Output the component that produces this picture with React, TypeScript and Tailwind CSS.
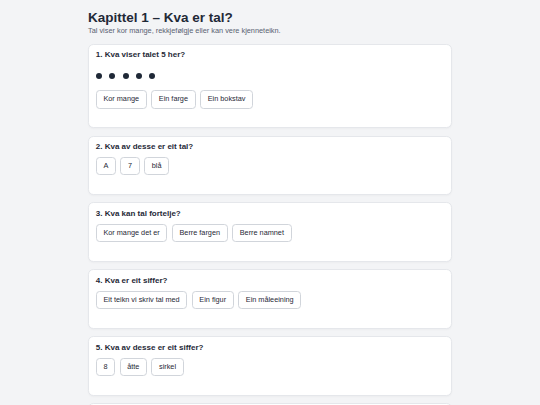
import React from 'react';

type Question = {
  id: number;
  text: string;
  dots?: number;
  options: string[];
};

const questions: Question[] = [
  { id: 1, text: 'Kva viser talet 5 her?', dots: 5, options: ['Kor mange', 'Ein farge', 'Ein bokstav'] },
  { id: 2, text: 'Kva av desse er eit tal?', options: ['A', '7', 'blå'] },
  { id: 3, text: 'Kva kan tal fortelje?', options: ['Kor mange det er', 'Berre fargen', 'Berre namnet'] },
  { id: 4, text: 'Kva er eit siffer?', options: ['Eit teikn vi skriv tal med', 'Ein figur', 'Ein måleeining'] },
  { id: 5, text: 'Kva av desse er eit siffer?', options: ['8', 'åtte', 'sirkel'] },
  { id: 6, text: 'Kva tal kjem etter 3?', options: ['4', '2', '5'] },
];

export default function App() {
  return (
    <div className="min-h-screen bg-[#f3f4f6] font-['Liberation_Sans',Arial,sans-serif] text-[#1f2937]">
      <div className="w-[364px] mx-auto pt-[9.6px] pb-[14px]">
        <h1 className="text-[13.5px] leading-[16.2px] font-bold text-[#1f2937]">Kapittel 1 – Kva er tal?</h1>
        <p className="text-[7.35px] leading-[10.8px] text-[#596272] mb-[7.4px]">
          Tal viser kor mange, rekkjefølgje eller kan vere kjenneteikn.
        </p>

        <div className="flex flex-col gap-[7.2px]">
          {questions.map((q) => (
            <div key={q.id} className="bg-white border border-[#e5e7eb] rounded-[5.4px] px-[6.8px] py-[4.4px] shadow-[0_1px_2px_rgba(0,0,0,0.03)]">
              <h2 className="text-[8px] leading-[12.6px] font-bold text-[#1f2937] mb-[3.6px]">
                {q.id}. {q.text}
              </h2>
              {q.dots ? (
                <div className="h-[20px] flex items-center gap-[7.4px] mb-[4.6px]">
                  {Array.from({ length: q.dots }).map((_, i) => (
                    <span key={i} className="w-[6px] h-[6px] rounded-full bg-[#1f2937]" />
                  ))}
                </div>
              ) : null}
              <div className="flex flex-wrap gap-[4.5px]">
                {q.options.map((opt) => (
                  <button
                    key={opt}
                    className="bg-white border border-[#d1d5db] rounded-[3.6px] px-[6.6px] py-[2.8px] text-[7.3px] leading-[10.8px] text-[#1f2937]"
                  >
                    {opt}
                  </button>
                ))}
              </div>
              <p className="mt-[3.6px] h-[10.8px] text-[7.2px] leading-[10.8px]"></p>
            </div>
          ))}
        </div>
      </div>
    </div>
  );
}
